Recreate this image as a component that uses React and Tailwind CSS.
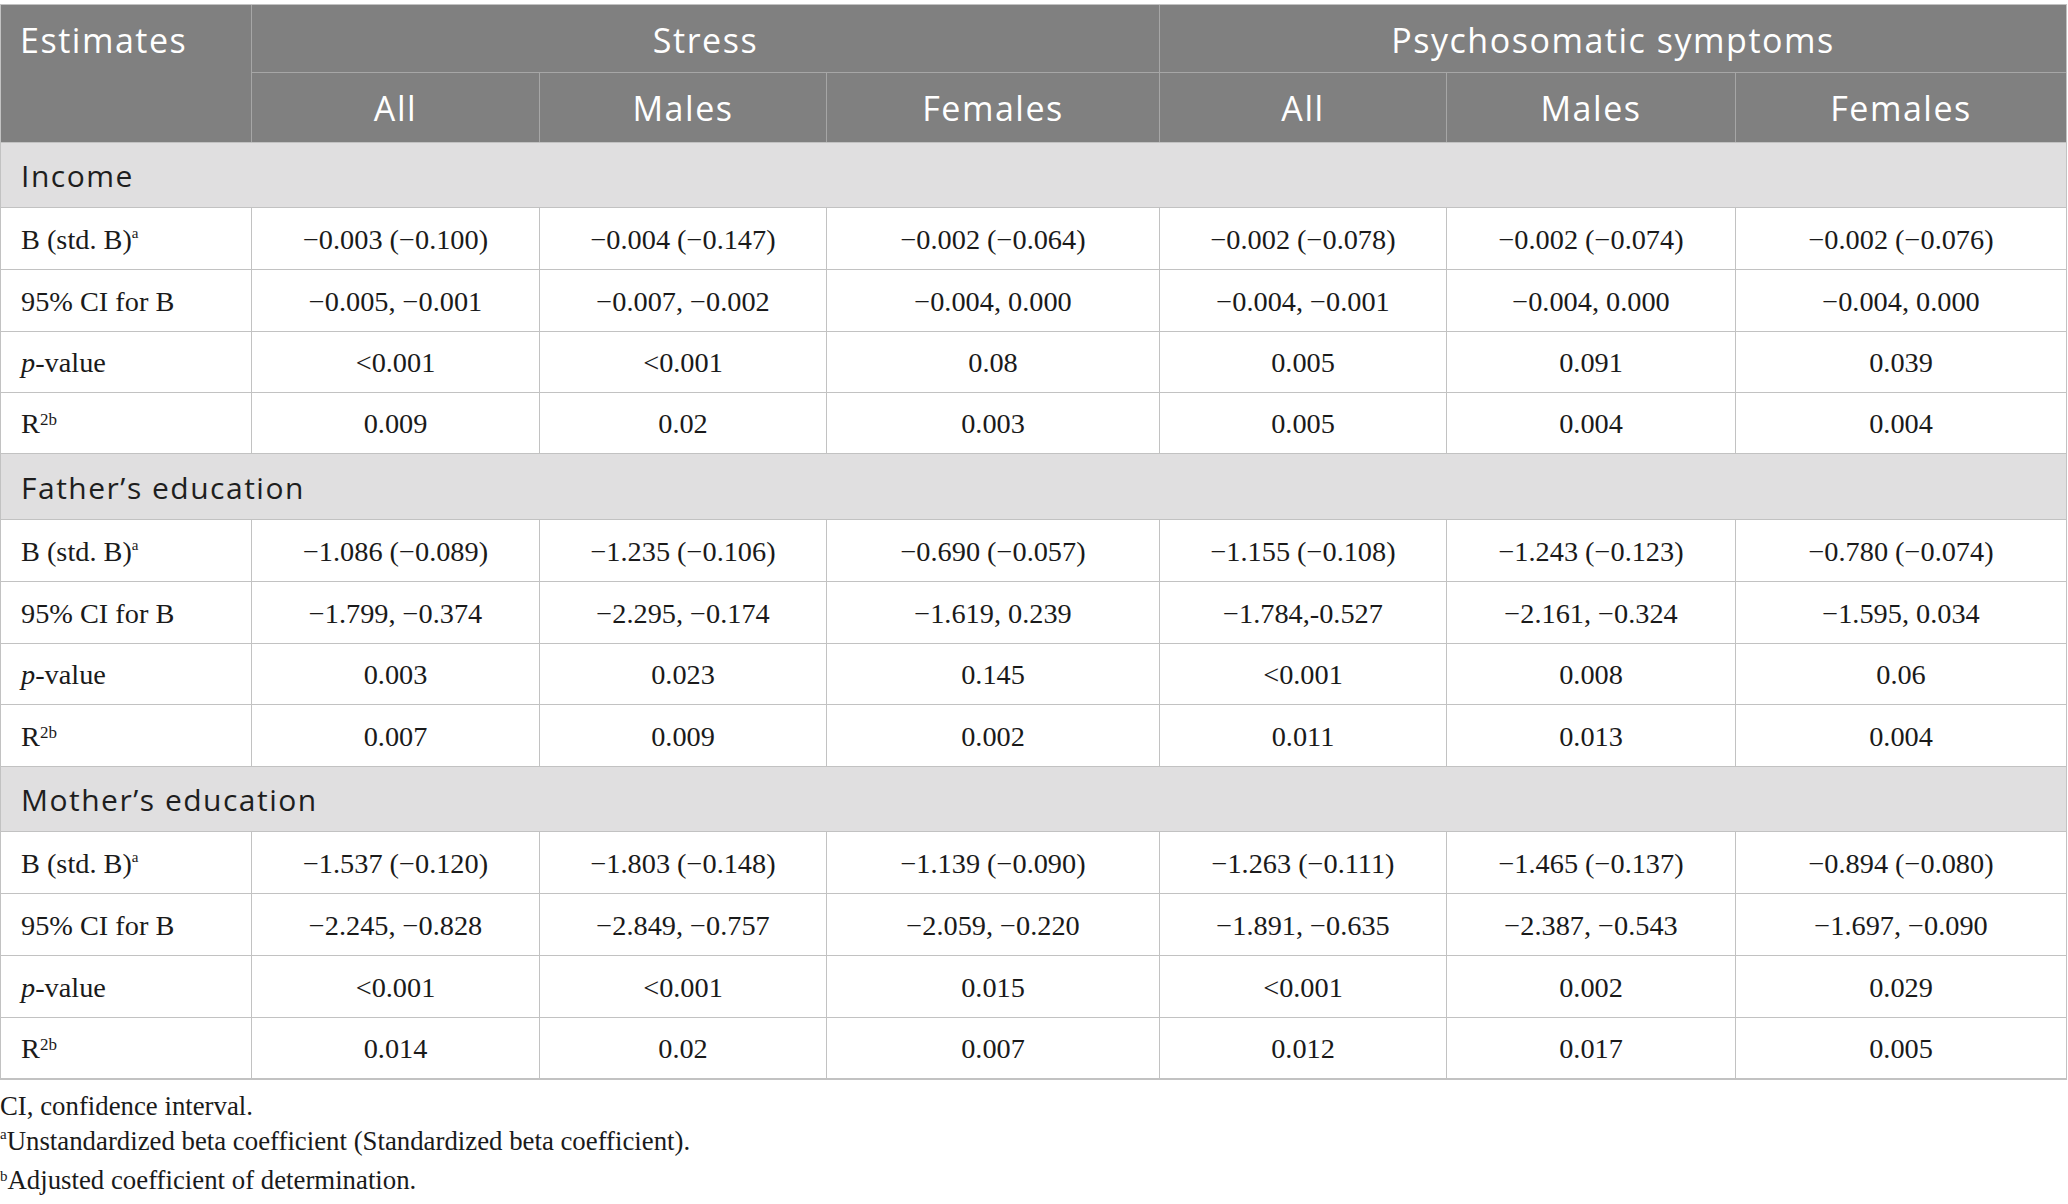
import React from "react";

const GRID = "grid grid-cols-[251px_288px_287px_333px_287px_289px_330px]";
const SANS = "font-['Open_Sans',sans-serif]";
const SERIF = "font-['Liberation_Serif',serif]";

const sections = [
  {
    title: "Income",
    h: "h-[65px]",
    rows: [
      ["b", ["−0.003 (−0.100)", "−0.004 (−0.147)", "−0.002 (−0.064)", "−0.002 (−0.078)", "−0.002 (−0.074)", "−0.002 (−0.076)"], "h-[62px]"],
      ["ci", ["−0.005, −0.001", "−0.007, −0.002", "−0.004, 0.000", "−0.004, −0.001", "−0.004, 0.000", "−0.004, 0.000"], "h-[62px]"],
      ["p", ["<0.001", "<0.001", "0.08", "0.005", "0.091", "0.039"], "h-[61px]"],
      ["r", ["0.009", "0.02", "0.003", "0.005", "0.004", "0.004"], "h-[61px]"],
    ],
  },
  {
    title: "Father’s education",
    h: "h-[66px]",
    rows: [
      ["b", ["−1.086 (−0.089)", "−1.235 (−0.106)", "−0.690 (−0.057)", "−1.155 (−0.108)", "−1.243 (−0.123)", "−0.780 (−0.074)"], "h-[62px]"],
      ["ci", ["−1.799, −0.374", "−2.295, −0.174", "−1.619, 0.239", "−1.784,-0.527", "−2.161, −0.324", "−1.595, 0.034"], "h-[62px]"],
      ["p", ["0.003", "0.023", "0.145", "<0.001", "0.008", "0.06"], "h-[61px]"],
      ["r", ["0.007", "0.009", "0.002", "0.011", "0.013", "0.004"], "h-[62px]"],
    ],
  },
  {
    title: "Mother’s education",
    h: "h-[65px]",
    rows: [
      ["b", ["−1.537 (−0.120)", "−1.803 (−0.148)", "−1.139 (−0.090)", "−1.263 (−0.111)", "−1.465 (−0.137)", "−0.894 (−0.080)"], "h-[62px]"],
      ["ci", ["−2.245, −0.828", "−2.849, −0.757", "−2.059, −0.220", "−1.891, −0.635", "−2.387, −0.543", "−1.697, −0.090"], "h-[62px]"],
      ["p", ["<0.001", "<0.001", "0.015", "<0.001", "0.002", "0.029"], "h-[62px]"],
      ["r", ["0.014", "0.02", "0.007", "0.012", "0.017", "0.005"], "h-[60px]"],
    ],
  },
];

function Label({ kind }) {
  if (kind === "b")
    return (
      <span>
        B (std. B)<span className="text-[15px] relative -top-[11px]">a</span>
      </span>
    );
  if (kind === "ci") return <span>95% CI for B</span>;
  if (kind === "p")
    return (
      <span>
        <i>p</i>-value
      </span>
    );
  return (
    <span>
      R<span className="text-[17px] relative -top-[8px]">2b</span>
    </span>
  );
}

export default function App() {
  return (
    <div className="bg-white w-[2068px] min-h-[1204px] pt-[4px]">
      <div className="w-[2067px] border border-[#c2c2c2] border-b-2">
        {/* header */}
        <div className={`${GRID} grid-rows-[68px_69px] bg-[#808080] text-white ${SANS} text-[34px] tracking-[0.045em] border-b border-[#c2c2c2]`}>
          <div className="row-span-2 border-r border-[#a6a6a6] pl-[19px]">
            <div className="h-[67px] flex items-center pt-[3px]">Estimates</div>
          </div>
          <div className="col-span-3 border-r border-b border-[#a6a6a6] flex items-center justify-center pt-[3px]">Stress</div>
          <div className="col-span-3 border-b border-[#a6a6a6] flex items-center justify-center pt-[3px]">Psychosomatic symptoms</div>
          {["All", "Males", "Females", "All", "Males", "Females"].map((t, i) => (
            <div
              key={i}
              className={`flex items-center justify-center pt-[2px] ${i < 5 ? "border-r border-[#a6a6a6]" : ""}`}
            >
              {t}
            </div>
          ))}
        </div>
        {sections.map((s, si) => (
          <div key={si}>
            <div className={`${s.h} bg-[#e0dfe0] border-b border-[#c2c2c2] flex items-center pt-[1px] pl-[20px] ${SANS} text-[30px] tracking-[0.05em] text-[#1e1e1e]`}>
              {s.title}
            </div>
            {s.rows.map(([kind, vals, h], ri) => {
              const last = si === sections.length - 1 && ri === s.rows.length - 1;
              return (
                <div
                  key={ri}
                  className={`${GRID} ${h} ${last ? "" : "border-b border-[#c2c2c2]"} ${SERIF} text-[28.3px] text-[#1a1a1a]`}
                >
                  <div className="border-r border-[#c2c2c2] flex items-center pl-[20px] pt-[3px]">
                    <Label kind={kind} />
                  </div>
                  {vals.map((v, vi) => (
                    <div
                      key={vi}
                      className={`flex items-center justify-center pt-[3px] ${vi < 5 ? "border-r border-[#c2c2c2]" : ""}`}
                    >
                      {v}
                    </div>
                  ))}
                </div>
              );
            })}
          </div>
        ))}
      </div>
      <div className={`${SERIF} text-[26.8px] leading-[35px] text-[#1a1a1a] pt-[9px]`}>
        <p>CI, confidence interval.</p>
        <p>
          <span className="text-[15px] relative -top-[11px]">a</span>Unstandardized beta coefficient (Standardized beta coefficient).
        </p>
        <p>
          <span className="text-[15px] relative -top-[8px]">b</span>Adjusted coefficient of determination.
        </p>
      </div>
    </div>
  );
}
